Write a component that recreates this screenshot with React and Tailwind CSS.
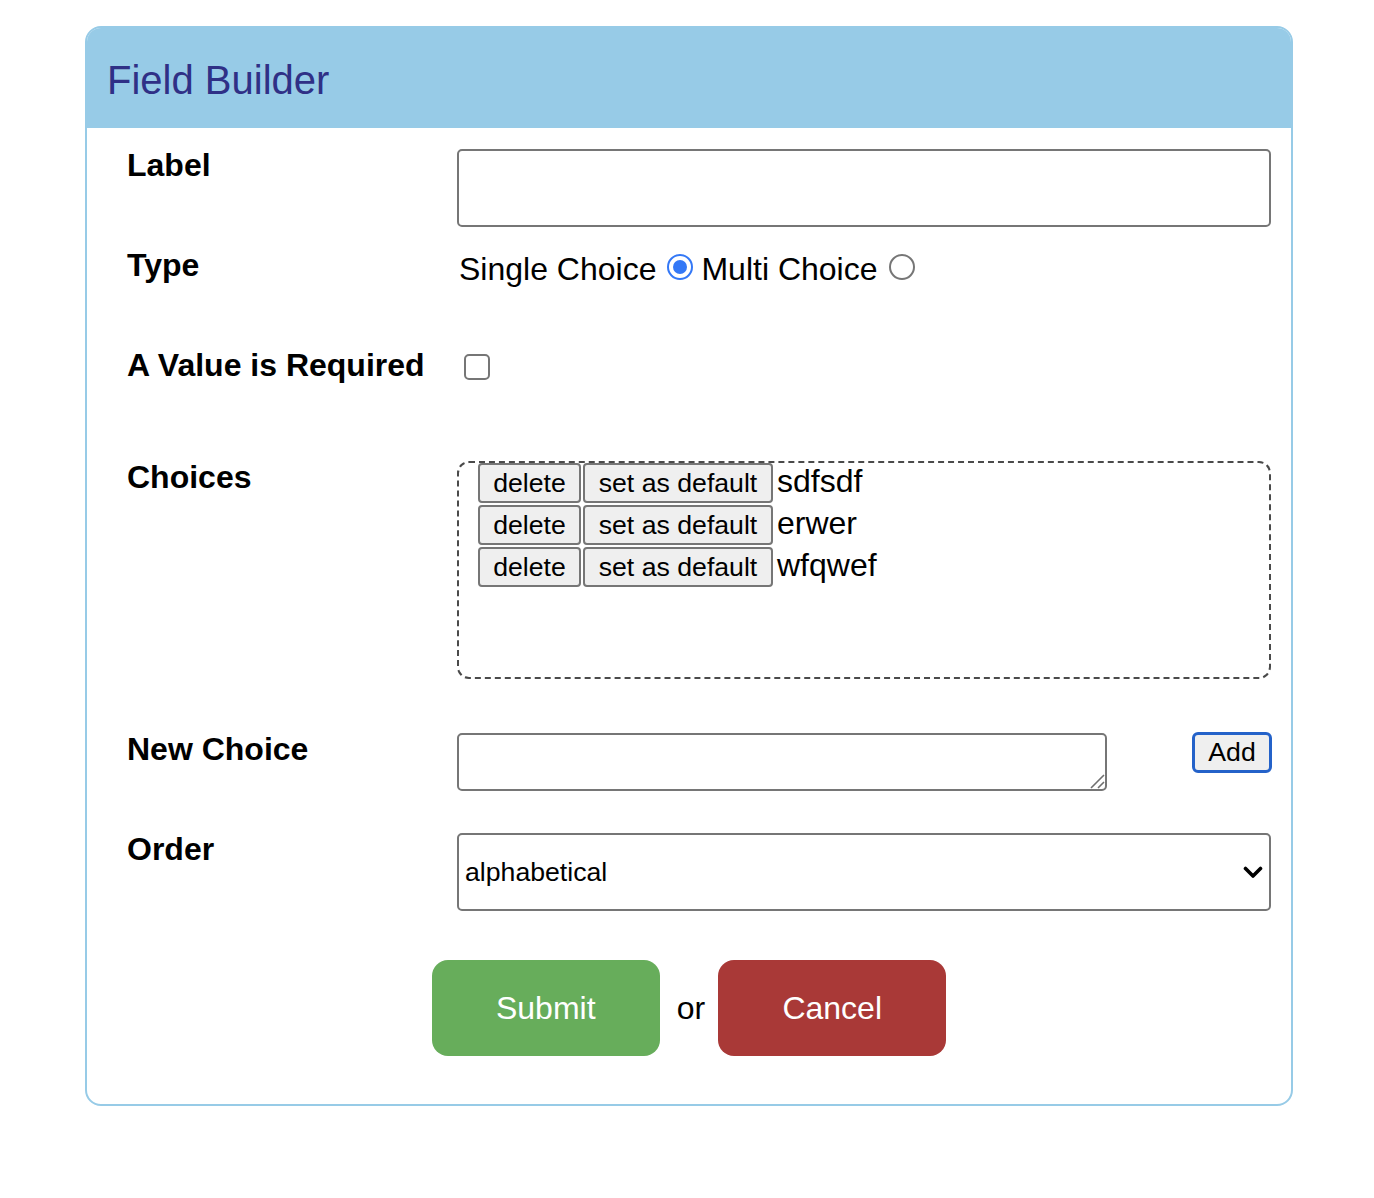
import React from "react";

const choices = ["sdfsdf", "erwer", "wfqwef"];

function Row({ label, h, children }) {
  return (
    <div className="flex items-start" style={{ height: h }}>
      <div className="w-[330px] shrink-0 text-[32px] leading-[36px] font-bold text-black">{label}</div>
      <div className="flex-1 min-w-0">{children}</div>
    </div>
  );
}

export default function App() {
  return (
    <div className="bg-white min-h-[1198px] pt-[26px] font-['Liberation_Sans',Arial,sans-serif] text-black">
      <div className="ml-[85px] w-[1208px] h-[1080px] border-2 border-[#97cbe7] rounded-[16px] overflow-hidden flex flex-col">
        <div className="h-[100px] bg-[#97cbe7] pt-[29px] pl-[20px] shrink-0">
          <h1 className="text-[40px] leading-[46px] text-[#2f3086] font-normal">Field Builder</h1>
        </div>
        <div className="flex-1 pt-[19px] pl-[40px] pr-[20px] pb-[48px] flex flex-col">
          <div className="h-[100px] flex items-start">
            <div className="w-[330px] shrink-0 text-[32px] leading-[36px] font-bold">Label</div>
            <input
              type="text"
              className="flex-1 mt-[2px] h-[78px] border-2 border-[#767676] rounded-[5px] bg-white outline-none px-2 text-[26.67px]"
            />
          </div>

          <Row label="Type" h={100}>
            <div className="flex items-start pt-[4px] pl-[2px] text-[32px] leading-[36px]">
              <span>Single Choice</span>
              <span className="ml-[11px] mt-[3px] w-[26px] h-[26px] rounded-full border-2 border-[#3478f6] flex items-center justify-center shrink-0">
                <span className="w-[14px] h-[14px] rounded-full bg-[#3478f6]" />
              </span>
              <span className="ml-[8px]">Multi Choice</span>
              <span className="ml-[11px] mt-[3px] w-[26px] h-[26px] rounded-full border-2 border-[#767676] bg-white shrink-0" />
            </div>
          </Row>

          <Row label="A Value is Required" h={112}>
            <div className="ml-[7px] mt-[7px] w-[26px] h-[26px] border-2 border-[#767676] rounded-[5px] bg-white" />
          </Row>

          <Row label="Choices" h={272}>
            <div className="mt-[2px] h-[218px] border-2 border-dashed border-[#4a4a4a] rounded-[12px] pl-[19px]">
              {choices.map((c) => (
                <div key={c} className="h-[42px] flex items-start">
                  <button className="w-[103px] h-[40px] bg-[#efefef] border-2 border-[#767676] rounded-[4px] text-[26.67px] leading-none text-black flex items-center justify-center">
                    delete
                  </button>
                  <button className="ml-[2px] w-[190px] h-[40px] bg-[#efefef] border-2 border-[#767676] rounded-[4px] text-[26.67px] leading-none text-black flex items-center justify-center">
                    set as default
                  </button>
                  <span className="ml-[4px] text-[32px] leading-[36px]">{c}</span>
                </div>
              ))}
            </div>
          </Row>

          <Row label="New Choice" h={100}>
            <div className="flex items-start justify-between">
              <div className="relative mt-[2px] w-[650px] h-[58px]">
                <textarea className="w-full h-full border-2 border-[#767676] rounded-[5px] bg-white outline-none resize-none p-1 text-[26.67px] block" />
                <svg className="absolute right-[2px] bottom-[2px]" width="16" height="16" viewBox="0 0 16 16">
                  <path d="M2 15 L15 2 M9 15 L15 9" fill="none" stroke="#6f6f6f" strokeWidth="1.6" />
                </svg>
              </div>
              <button className="mt-[1px] mr-[-1px] w-[80px] h-[41px] bg-[#efefef] border-[3px] border-[#2462c9] rounded-[6px] text-[26.67px] leading-none text-black flex items-center justify-center">
                Add
              </button>
            </div>
          </Row>

          <Row label="Order" h={129}>
            <div className="relative mt-[2px] h-[78px] border-2 border-[#767676] rounded-[5px] bg-white flex items-center pl-[6px] text-[26.67px]">
              <span>alphabetical</span>
              <svg className="absolute right-[6px] top-[31px]" width="20" height="13" viewBox="0 0 20 13">
                <path d="M2.5 2.5 L10 10 L17.5 2.5" fill="none" stroke="#000" strokeWidth="3.6" strokeLinecap="round" strokeLinejoin="round" />
              </svg>
            </div>
          </Row>

          <div className="flex items-center justify-center -ml-[40px] -mr-[20px]">
            <button className="w-[228px] h-[96px] rounded-[16px] bg-[#67ad5b] text-white text-[32px] flex items-center justify-center">
              Submit
            </button>
            <span className="ml-[17px] mr-[13px] text-[32px]">or</span>
            <button className="w-[228px] h-[96px] rounded-[16px] bg-[#a93937] text-white text-[32px] flex items-center justify-center">
              Cancel
            </button>
          </div>
        </div>
      </div>
    </div>
  );
}
